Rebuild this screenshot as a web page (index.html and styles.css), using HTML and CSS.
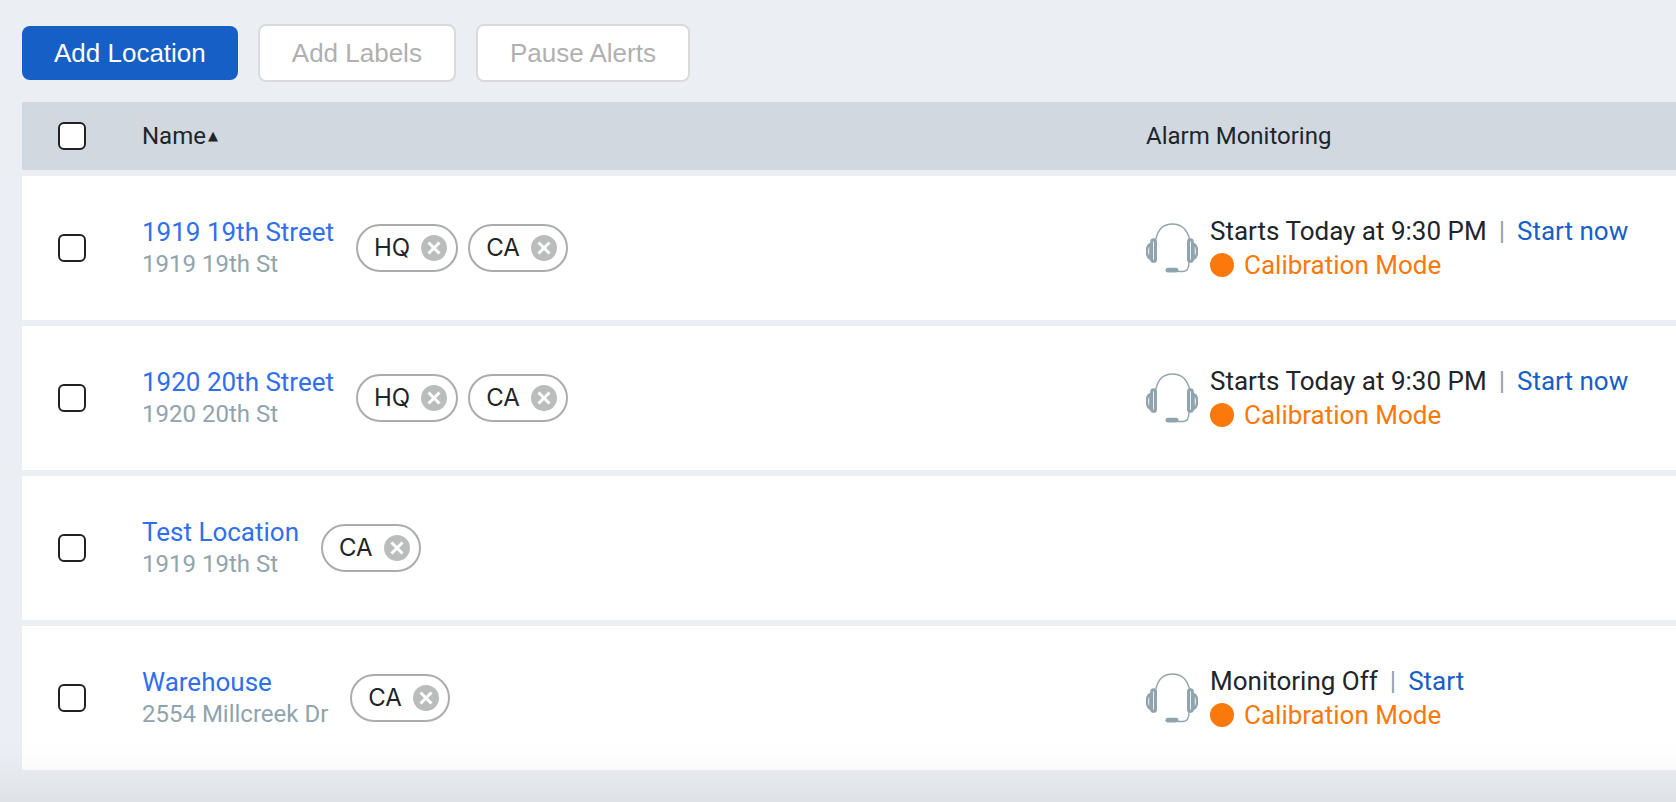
FILE: index.html
```
<!doctype html>
<html lang="en">
<head>
	<meta charset="UTF-8">
	<meta name="viewport" content="width=device-width, initial-scale=1.0">
	<title>Locations</title>
	<link rel="stylesheet" href="styles.css">
</head>
<body>
<svg class="sprite" aria-hidden="true">
	<symbol id="headset" viewBox="0 0 52 50">
		<g fill="none" stroke="currentColor">
			<path d="M10 16C12 6 18 1 26.500 1S41 6 43.500 16" stroke-width="1.400"/>
			<rect x="5.700" y="16.700" width="3.800" height="21.600" rx="1.900" stroke-width="3"/>
			<rect x="42.500" y="16.700" width="3.800" height="21.600" rx="1.900" stroke-width="3"/>
			<path d="M4.500 21C-0.300 23 -0.300 33 4.500 36z" stroke-width="2.600"/>
			<path d="M47.500 21C52.300 23 52.300 33 47.500 36z" stroke-width="2.600"/>
			<path d="M43 39C43 45 41 48.500 37 48.500H32" stroke-width="1.400"/>
		</g>
		<rect x="19.500" y="44.800" width="13" height="4.800" rx="2.400" fill="currentColor"/>
	</symbol>
	<symbol id="cross" viewBox="0 0 26 26">
		<circle cx="13" cy="13" r="13" fill="#bbbdbd"/>
		<path d="M7.500 7.500L18.500 18.500M18.500 7.500L7.500 18.500" stroke="#fff" stroke-width="3"/>
	</symbol>
</svg>

<div class="toolbar">
	<button type="button" class="btn btn-primary">Add Location</button>
	<button type="button" class="btn" disabled>Add Labels</button>
	<button type="button" class="btn" disabled>Pause Alerts</button>
</div>

<table class="locations">
	<thead>
	<tr>
		<th class="check"><input type="checkbox" aria-label="Select all locations"></th>
		<th><button type="button" class="sort">Name<span class="arrow">▲</span></button></th>
		<th class="alarm">Alarm Monitoring</th>
	</tr>
	</thead>
	<tbody>
	<tr>
		<td class="check"><input type="checkbox" aria-label="Select 1919 19th Street"></td>
		<td>
			<div class="place">
				<div class="info">
					<a href="#" class="title">1919 19th Street</a>
					<div class="address">1919 19th St</div>
				</div>
				<div class="tags">
					<span class="tag">HQ<button type="button" class="remove" aria-label="Remove HQ"><svg><use href="#cross"/></svg></button></span>
					<span class="tag">CA<button type="button" class="remove" aria-label="Remove CA"><svg><use href="#cross"/></svg></button></span>
				</div>
			</div>
		</td>
		<td>
			<div class="monitor">
				<svg class="headset"><use href="#headset"/></svg>
				<div>
					<div>Starts Today at 9:30 PM<span class="bar">|</span><a href="#" class="start">Start now</a></div>
					<div class="mode">Calibration Mode</div>
				</div>
			</div>
		</td>
	</tr>
	<tr>
		<td class="check"><input type="checkbox" aria-label="Select 1920 20th Street"></td>
		<td>
			<div class="place">
				<div class="info">
					<a href="#" class="title">1920 20th Street</a>
					<div class="address">1920 20th St</div>
				</div>
				<div class="tags">
					<span class="tag">HQ<button type="button" class="remove" aria-label="Remove HQ"><svg><use href="#cross"/></svg></button></span>
					<span class="tag">CA<button type="button" class="remove" aria-label="Remove CA"><svg><use href="#cross"/></svg></button></span>
				</div>
			</div>
		</td>
		<td>
			<div class="monitor">
				<svg class="headset"><use href="#headset"/></svg>
				<div>
					<div>Starts Today at 9:30 PM<span class="bar">|</span><a href="#" class="start">Start now</a></div>
					<div class="mode">Calibration Mode</div>
				</div>
			</div>
		</td>
	</tr>
	<tr>
		<td class="check"><input type="checkbox" aria-label="Select Test Location"></td>
		<td>
			<div class="place">
				<div class="info">
					<a href="#" class="title">Test Location</a>
					<div class="address">1919 19th St</div>
				</div>
				<div class="tags">
					<span class="tag">CA<button type="button" class="remove" aria-label="Remove CA"><svg><use href="#cross"/></svg></button></span>
				</div>
			</div>
		</td>
		<td></td>
	</tr>
	<tr>
		<td class="check"><input type="checkbox" aria-label="Select Warehouse"></td>
		<td>
			<div class="place">
				<div class="info">
					<a href="#" class="title">Warehouse</a>
					<div class="address">2554 Millcreek Dr</div>
				</div>
				<div class="tags">
					<span class="tag">CA<button type="button" class="remove" aria-label="Remove CA"><svg><use href="#cross"/></svg></button></span>
				</div>
			</div>
		</td>
		<td>
			<div class="monitor">
				<svg class="headset"><use href="#headset"/></svg>
				<div>
					<div>Monitoring Off<span class="bar">|</span><a href="#" class="start">Start</a></div>
					<div class="mode">Calibration Mode</div>
				</div>
			</div>
		</td>
	</tr>
	</tbody>
</table>
<div class="fade"></div>
</body>
</html>
```
FILE: styles.css
```
*
{
	box-sizing: border-box;
}

body
{
	margin: 0;
	padding: 24px 0 0 22px;
	background-color: #ebeff4;
	color: #212529;
	font-family: Roboto, sans-serif;
	font-size: 26px;
	line-height: 34px;
}

a
{
	text-decoration: none;
}

button
{
	padding: 0;
	border: 0;
	background: none;
	color: inherit;
	font: inherit;
	cursor: pointer;
}

.sprite
{
	display: none;
}

.toolbar
{
	display: flex;
	align-items: center;
	gap: 20px;
	margin-bottom: 14px;
}

.btn
{
	padding: 10px 32px;
	border: 2px solid #dadada;
	border-radius: 8px;
	background-color: #fff;
	color: #b0b0b0;
	font-family: "Liberation Sans", Arial, sans-serif;
}

.btn-primary
{
	border: 0;
	background-color: #165fc7;
	color: #fff;
}

.locations
{
	width: 100%;
	border-spacing: 0 6px;
}

.locations th
{
	height: 68px;
	padding: 0;
	background-color: #d1d8df;
	font-size: 24px;
	font-weight: 400;
	text-align: left;
}

.locations td
{
	height: 144px;
	padding: 0;
	background-color: #fff;
}

.locations .check
{
	width: 120px;
	padding-left: 36px;
}

.locations .alarm
{
	width: 530px;
}

.check input
{
	display: block;
	width: 28px;
	height: 28px;
	margin: 0;
	appearance: none;
	border: 2px solid #212121;
	border-radius: 6px;
	background-color: #fff;
}

.check input:checked
{
	background-color: #165fc7;
}

.sort
{
	display: flex;
	align-items: center;
	gap: 2px;
}

.arrow
{
	font-family: "DejaVu Sans", sans-serif;
	font-size: 13px;
}

.place
{
	display: flex;
	align-items: center;
	gap: 22px;
}

.info
{
	line-height: 32px;
}

.title
{
	display: block;
	color: #2f6fed;
}

.address
{
	color: #90a4ae;
	font-size: 24px;
}

.tags
{
	display: flex;
	gap: 10px;
}

.tag
{
	display: flex;
	align-items: center;
	gap: 11px;
	height: 48px;
	padding: 0 9px 0 16px;
	border: 2px solid #acacac;
	border-radius: 24px;
	font-family: Inter, sans-serif;
	font-size: 24px;
}

.remove,
.remove svg
{
	display: block;
	width: 26px;
	height: 26px;
}

.monitor
{
	display: flex;
	align-items: center;
	gap: 12px;
}

.headset
{
	width: 52px;
	height: 50px;
	color: #90a4ae;
}

.bar
{
	margin: 0 12px;
	color: #90a4ae;
}

.start
{
	color: #165fc7;
}

.mode
{
	display: flex;
	align-items: center;
	gap: 10px;
	color: #fb780a;
}

.mode::before
{
	content: "";
	width: 24px;
	height: 24px;
	border-radius: 50%;
	background-color: #fb780a;
}

/* shade along the bottom edge of the window */
.fade
{
	position: fixed;
	left: 0;
	right: 0;
	bottom: 0;
	height: 60px;
	background: linear-gradient(rgba(0, 0, 0, 0), rgba(0, 0, 0, .02) 50%, rgba(0, 0, 0, .05));
	pointer-events: none;
}
```
